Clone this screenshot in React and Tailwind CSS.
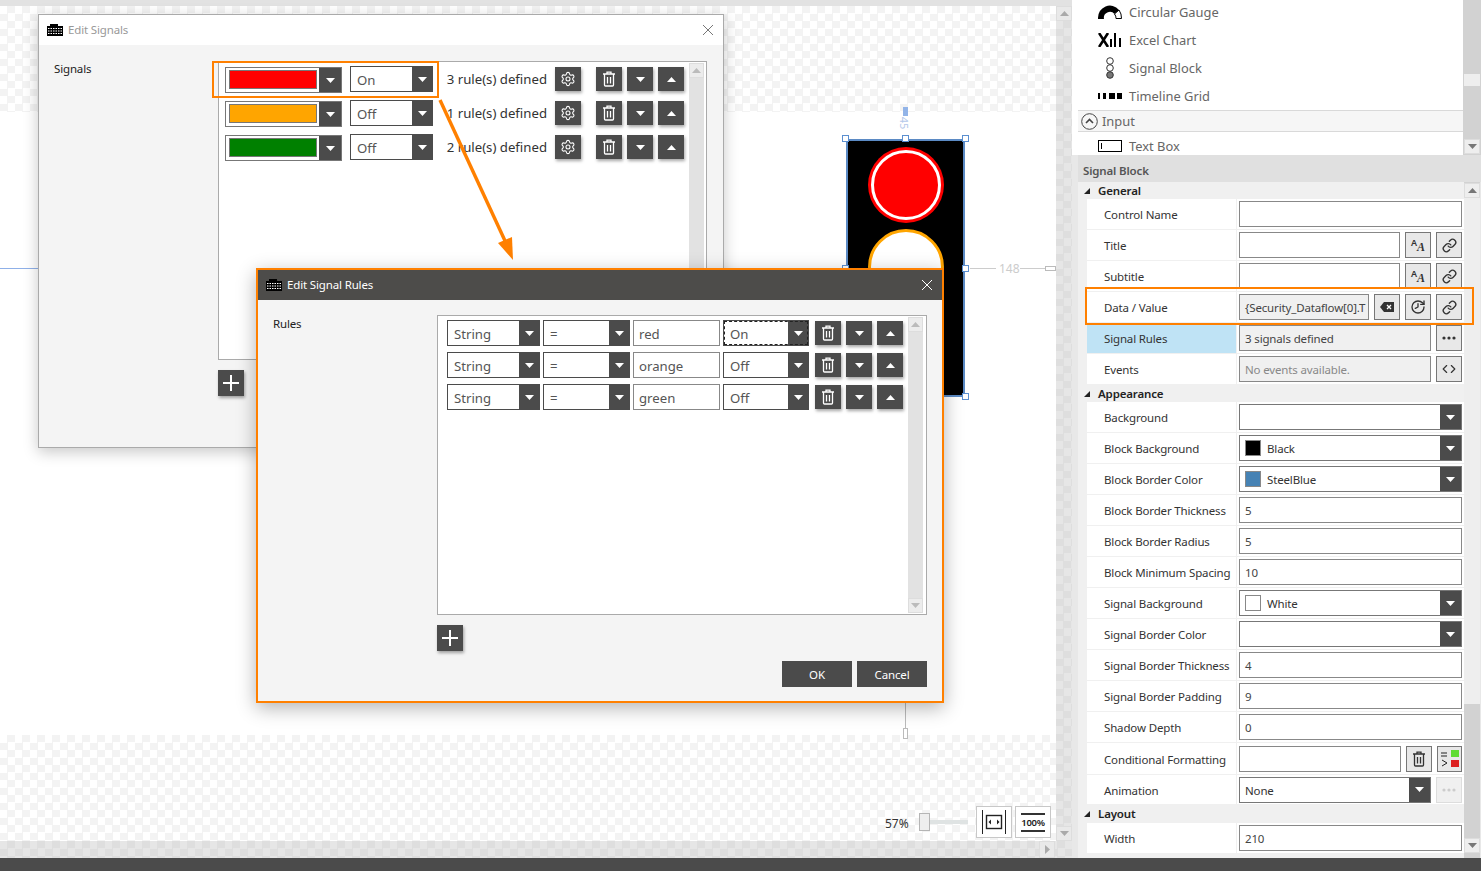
import { Code, Link, Settings, History } from 'lucide-react'

const checker = "bg-[conic-gradient(#f3f3f3_25%,#ffffff_0_50%,#f3f3f3_0_75%,#ffffff_0)] bg-[length:15px_15px]"
const barChecker = "bg-[conic-gradient(#dedede_25%,#e6e6e6_0_50%,#dedede_0_75%,#e6e6e6_0)] bg-[length:15px_15px]"
const small = 'text-[11.5px] tracking-[-0.15px]'
const big = 'text-[13.2px]'

function Tri({ up, className = 'text-white' }) {
  return (
    <svg width="9" height="5" viewBox="0 0 9 5" className={className}>
      <polygon points={up ? '4.5,0 9,5 0,5' : '0,0 9,0 4.5,5'} fill="currentColor" />
    </svg>
  )
}

function Trash() {
  return (
    <svg width="14" height="16" viewBox="0 0 14 16" fill="none" stroke="currentColor" strokeWidth="1.3">
      <path d="M1 3h12M5 3V1.2h4V3M2.5 3.5V14a1 1 0 0 0 1 1h7a1 1 0 0 0 1-1V3.5" />
      <path d="M5.5 6v6.5M8.5 6v6.5" />
    </svg>
  )
}

function AppLogo() {
  return (
    <svg width="16" height="12" viewBox="0 0 16 12" className="shrink-0">
      <path d="M0 2h3V0h8v2h5v10H0z" fill="#000" />
      <path d="M1 4.5h14M1 7h14M1 9.5h14" stroke="#fff" strokeWidth="1" strokeDasharray="1.5 1" />
    </svg>
  )
}

function CloseX({ className }) {
  return (
    <svg width="12" height="12" viewBox="0 0 12 12" className={className}>
      <path d="M1 1l10 10M11 1L1 11" stroke="currentColor" strokeWidth="1" fill="none" />
    </svg>
  )
}

// combo in the dialogs
function Combo({ className = '', text, focused }) {
  return (
    <div className={`flex h-[26px] shrink-0 border border-[#4b4b4b] bg-white ${className}`}>
      <div className={`flex-1 pl-[6px] leading-[26px] text-[#555] ${big}`}>{text}</div>
      <div className="flex w-[20px] items-center justify-center bg-[#4b4b4b]"><Tri /></div>
      {focused && <div className="pointer-events-none absolute inset-[2px] outline-1 outline-dashed outline-[#222]" />}
    </div>
  )
}

function DarkBtn({ children, className = '' }) {
  return (
    <div className={`mt-[1px] flex h-[24px] w-[26px] shrink-0 items-center justify-center bg-[#4b4b4b] text-white shadow-[1px_2px_3px_rgba(0,0,0,0.35)] ${className}`}>
      {children}
    </div>
  )
}

function ColorCombo({ color }) {
  return (
    <div className="mt-[1px] flex h-[26px] w-[117px] shrink-0 border border-[#777] bg-white">
      <div className="flex-1 py-[2px] pl-[3px]">
        <div className={`h-[19px] w-[88px] border border-[#777] ${color}`} />
      </div>
      <div className="flex w-[22px] items-center justify-center bg-[#4b4b4b]"><Tri /></div>
    </div>
  )
}

function SignalRow({ color, state, count }) {
  return (
    <div className="flex h-[34px] items-start">
      <ColorCombo color={color} />
      <Combo className="ml-[8px] w-[83px]" text={state} />
      <div className={`ml-[13px] mt-[3px] w-[101px] text-right leading-[20px] whitespace-nowrap text-[#333] ${big}`}>{count} rule(s) defined</div>
      <DarkBtn className="ml-[8px]"><Settings size={16} strokeWidth={1.6} /></DarkBtn>
      <DarkBtn className="ml-[15px]"><Trash /></DarkBtn>
      <DarkBtn className="ml-[5px]"><Tri /></DarkBtn>
      <DarkBtn className="ml-[5px]"><Tri up /></DarkBtn>
    </div>
  )
}

function RuleRow({ value, state, focused }) {
  return (
    <div className="flex h-[32px] items-start">
      <Combo className="w-[93px]" text="String" />
      <Combo className="ml-[3px] w-[87px]" text="=" />
      <div className={`ml-[3px] h-[26px] w-[87px] shrink-0 border border-[#888] bg-white pl-[5px] leading-[26px] text-[#555] ${big}`}>{value}</div>
      <div className="relative ml-[3px]">
        <Combo className="w-[86px]" text={state} focused={focused} />
      </div>
      <DarkBtn className="ml-[6px]"><Trash /></DarkBtn>
      <DarkBtn className="ml-[5px]"><Tri /></DarkBtn>
      <DarkBtn className="ml-[5px]"><Tri up /></DarkBtn>
    </div>
  )
}

function ListScroll({ className = '' }) {
  return (
    <div className={`flex w-[15px] shrink-0 flex-col justify-between bg-[#e2e2e2] ${className}`}>
      <div className="flex h-[15px] items-center justify-center border border-[#ddd] bg-[#ececec]"><Tri up className="text-[#bbb]" /></div>
      <div className="flex h-[15px] items-center justify-center border border-[#ddd] bg-[#ececec]"><Tri className="text-[#bbb]" /></div>
    </div>
  )
}

function PlusBtn({ className = '' }) {
  return (
    <div className={`flex h-[26px] w-[26px] items-center justify-center bg-[#4b4b4b] shadow-[1px_2px_3px_rgba(0,0,0,0.35)] ${className}`}>
      <svg width="16" height="16" viewBox="0 0 16 16"><path d="M8 0v16M0 8h16" stroke="#fff" strokeWidth="2" /></svg>
    </div>
  )
}

function EditSignals() {
  return (
    <div className="absolute left-[38px] top-[14px] h-[434px] w-[686px] border border-[#aaa] bg-[#f4f4f4] shadow-[0_4px_14px_rgba(0,0,0,0.22)]">
      <div className="flex h-[30px] items-center bg-white pl-[8px] pr-[9px]">
        <AppLogo />
        <span className={`ml-[5px] flex-1 text-[#999] ${small}`}>Edit Signals</span>
        <CloseX className="text-[#777]" />
      </div>
      <div className="flex pl-[15px] pt-[16px]">
        <div className={`w-[164px] leading-[16px] text-[#222] ${small}`}>Signals</div>
        <div>
          <div className="flex h-[299px] w-[489px] border border-[#aaa] bg-white">
            <div className="flex-1 pl-[6px] pt-[4px]">
              <SignalRow color="bg-[#ff0000]" state="On" count="3" />
              <SignalRow color="bg-[#ffa500]" state="Off" count="1" />
              <SignalRow color="bg-[#008000]" state="Off" count="2" />
            </div>
            <ListScroll className="mr-[2px] mt-[1px] mb-[1px]" />
          </div>
          <PlusBtn className="mt-[10px]" />
        </div>
      </div>
    </div>
  )
}

function EditRules() {
  return (
    <div className="absolute left-[256px] top-[268px] flex h-[435px] w-[688px] flex-col border-2 border-[#ff8000] bg-[#f4f4f4] shadow-[0_5px_18px_rgba(0,0,0,0.3)]">
      <div className="flex h-[30px] shrink-0 items-center bg-[#4d4c4a] pl-[8px] pr-[9px]">
        <AppLogo />
        <span className={`ml-[5px] flex-1 text-white ${small}`}>Edit Signal Rules</span>
        <CloseX className="text-white" />
      </div>
      <div className="flex pl-[15px] pt-[15px]">
        <div className={`w-[164px] pt-[1px] leading-[16px] text-[#222] ${small}`}>Rules</div>
        <div>
          <div className="flex h-[300px] w-[490px] border border-[#aaa] bg-white">
            <div className="flex-1 pl-[9px] pt-[4px]">
              <RuleRow value="red" state="On" focused />
              <RuleRow value="orange" state="Off" />
              <RuleRow value="green" state="Off" />
            </div>
            <ListScroll className="mr-[3px] mt-[1px] mb-[1px]" />
          </div>
          <PlusBtn className="mt-[10px]" />
          <div className="mt-[10px] flex justify-end gap-[5px]">
            <div className={`flex h-[26px] w-[70px] items-center justify-center bg-[#4b4b4b] pt-[2px] text-white ${small}`}>OK</div>
            <div className={`flex h-[26px] w-[70px] items-center justify-center bg-[#4b4b4b] pt-[2px] text-white ${small}`}>Cancel</div>
          </div>
        </div>
      </div>
    </div>
  )
}

function Handle({ className }) {
  return <div className={`absolute h-[7px] w-[7px] border border-[#5b8fd0] bg-white ${className}`} />
}

// the signal control on the design surface with its margin marks
function SignalBlock() {
  return (
    <>
      <div className="absolute left-[846px] top-[139px] h-[258px] w-[119px] overflow-hidden border-2 border-[#5b8ac4] bg-black">
        <div className="absolute left-[20px] top-[6px] h-[76px] w-[76px] rounded-full bg-[#ff0000] p-[3px]">
          <div className="h-full w-full rounded-full border-[3px] border-white bg-[#ff0000]" />
        </div>
        <div className="absolute left-[20px] top-[88px] h-[76px] w-[76px] rounded-full border-[3px] border-[#ffa500] bg-white" />
        <div className="absolute left-[20px] top-[170px] h-[76px] w-[76px] rounded-full border-[3px] border-[#008000] bg-black" />
      </div>
      <Handle className="left-[842px] top-[135px]" />
      <Handle className="left-[902px] top-[135px]" />
      <Handle className="left-[962px] top-[135px]" />
      <Handle className="left-[842px] top-[265px]" />
      <Handle className="left-[962px] top-[265px]" />
      <Handle className="left-[962px] top-[393px]" />
      <div className="absolute left-[903px] top-[107px] h-[9px] w-[5px] bg-[#92b4e8]" />
      <div className="absolute left-[898px] top-[117px] rotate-90 text-[11px] leading-[12px] text-[#b4c8ea]">45</div>
      <div className="absolute left-0 top-[268px] h-[1px] w-[40px] bg-[#8fb0e8]" />
      <div className="absolute left-[970px] top-[268px] h-[1px] w-[26px] bg-[#ccc]" />
      <div className="absolute left-[999px] top-[262px] text-[12px] leading-[14px] text-[#ccc]">148</div>
      <div className="absolute left-[1020px] top-[268px] h-[1px] w-[26px] bg-[#ccc]" />
      <div className="absolute left-[1045px] top-[266px] h-[5px] w-[11px] border border-[#bbb] bg-white" />
      <div className="absolute left-[905px] top-[703px] h-[26px] w-[1px] bg-[#bbb]" />
      <div className="absolute left-[903px] top-[728px] h-[11px] w-[5px] border border-[#bbb] bg-white" />
    </>
  )
}

function ZoomBar() {
  return (
    <div className="absolute left-[885px] top-[806px] flex h-[32px] items-center">
      <span className="w-[34px] pt-[3px] text-[12px] text-[#333]">57%</span>
      <div className="h-[18px] w-[11px] border border-[#b5b5b5] bg-[#eee]" />
      <div className="h-[4px] w-[38px] bg-[#dfe3e3]" />
      <div className="ml-[8px] flex h-[32px] w-[36px] items-center justify-center border border-[#c8c8c8] bg-white">
        <svg width="26" height="26" viewBox="0 0 26 26" fill="none">
          <path d="M1.5 1v24M24.5 1v24" stroke="#222" />
          <rect x="5.5" y="6.5" width="15" height="13" stroke="#222" strokeWidth="1.4" />
          <path d="M10 10.5v5l-2.5-2.5zM16 10.5v5l2.5-2.5z" fill="#222" />
        </svg>
      </div>
      <div className="ml-[3px] flex h-[32px] w-[36px] flex-col items-center justify-center border border-[#c8c8c8] bg-white">
        <div className="w-[24px] border-y-2 border-[#333] text-center text-[9.5px] font-semibold leading-[15px] tracking-[-0.3px] text-[#222]">100%</div>
      </div>
    </div>
  )
}

function Canvas() {
  return (
    <div className="flex w-[1072px] shrink-0 flex-col">
      <div className="h-[6px] bg-[#e2e2e2]" />
      <div className="flex min-h-0 flex-1">
        <div className="flex w-[1056px] flex-col">
          <div className={`h-[106px] ${checker}`} />
          <div className="h-[623px] bg-white" />
          <div className={`flex-1 ${checker}`} />
        </div>
        <div className={`flex w-[16px] flex-col justify-between ${barChecker}`}>
          <div className="flex h-[15px] items-center justify-center border border-[#ddd] bg-[#e9e9e9]"><Tri up className="text-[#aaa]" /></div>
          <div className="flex h-[15px] items-center justify-center border border-[#ddd] bg-[#e9e9e9]"><Tri className="text-[#aaa]" /></div>
        </div>
      </div>
      <div className={`flex h-[17px] justify-end pr-[17px] ${barChecker}`}>
        <div className="flex w-[16px] items-center justify-center border border-[#ddd] bg-[#e9e9e9]">
          <Tri className="rotate-[-90deg] text-[#aaa]" />
        </div>
      </div>
    </div>
  )
}

function Tool({ icon, label }) {
  return (
    <div className="flex h-[28px] items-center">
      <div className="flex w-[51px] justify-end pr-[7px]">{icon}</div>
      <span className="pt-[2px] text-[12.9px] text-[#666]">{label}</span>
    </div>
  )
}

function Toolbox() {
  return (
    <div className="ml-[6px] flex h-[155px] shrink-0 overflow-hidden">
      <div className="w-[385px] overflow-hidden bg-white">
        <div className="-mt-[2px]">
          <Tool label="Circular Gauge" icon={
            <svg width="24" height="14" viewBox="0 0 24 14">
              <path d="M0 14A12 13 0 0 1 21 5L16.5 9A6 6 0 0 0 6 14z" fill="#000" />
              <path d="M21 5A12 13 0 0 1 23.5 13.5H18A6 6 0 0 0 16.5 9z" fill="#fff" stroke="#000" />
            </svg>
          } />
          <Tool label="Excel Chart" icon={
            <svg width="24" height="14" viewBox="0 0 24 14"><path d="M1 0l9 14M10 0L1 14" stroke="#000" strokeWidth="2.6" /><path d="M13 6v8M17 0v14M22 5v9" stroke="#000" strokeWidth="2" /></svg>
          } />
          <Tool label="Signal Block" icon={
            <svg width="24" height="24" viewBox="0 0 24 24" fill="none" stroke="#333"><circle cx="12" cy="5" r="3.3" /><circle cx="12" cy="12" r="3.3" /><circle cx="12" cy="19" r="3.3" fill="#777" /></svg>
          } />
          <Tool label="Timeline Grid" icon={
            <svg width="24" height="6" viewBox="0 0 24 6"><path d="M0 0h2v6H0zM5 0h3v6H5zM11 0h6v6h-6zM19 0h5v6h-5z" fill="#000" /></svg>
          } />
          <div className="flex h-[22px] items-center border-y border-[#d9d9d9] bg-[#f6f6f6] pl-[3px] text-[12.9px] text-[#666]">
            <svg width="17" height="17" viewBox="0 0 17 17" fill="none" stroke="#444"><circle cx="8.5" cy="8.5" r="7.8" /><path d="M5 10l3.5-3.5L12 10" strokeWidth="1.6" /></svg>
            <span className="ml-[4px] pt-[2px]">Input</span>
          </div>
          <Tool label="Text Box" icon={
            <svg width="24" height="12" viewBox="0 0 24 12" fill="none" stroke="#000"><rect x="0.5" y="0.5" width="23" height="11" /><path d="M3.5 3v6" /></svg>
          } />
        </div>
      </div>
      <div className="flex w-[18px] flex-col justify-end bg-[#d2d2d2]">
        <div className="mb-[53px] mx-[1px] h-[12px] bg-[#eee]" />
        <div className="mx-[1px] mb-[1px] flex h-[15px] items-center justify-center border border-[#ddd] bg-[#eee]"><Tri className="text-[#777]" /></div>
      </div>
    </div>
  )
}

function Category({ label, className = 'h-[17px]' }) {
  return (
    <div className={`flex items-center bg-[#f0f0f0] pl-[6px] font-semibold text-[#222] ${small} ${className}`}>
      <svg width="6" height="6" viewBox="0 0 6 6"><polygon points="6,0 6,6 0,6" fill="#222" /></svg>
      <span className="ml-[8px]">{label}</span>
    </div>
  )
}

function Row({ label, active, className = 'h-[31px]', children }) {
  return (
    <div className={`ml-[9px] flex border-b border-[#f0f0f0] bg-white ${className}`}>
      <div className={`flex w-[149px] shrink-0 items-center whitespace-nowrap pl-[17px] pt-[2px] text-[#333] ${small} ${active ? 'bg-[#bfe3f5]' : ''}`}>{label}</div>
      <div className="flex min-w-0 flex-1 items-center gap-[5px] border-l border-[#f0f0f0] pl-[2px] pr-[2px]">{children}</div>
    </div>
  )
}

function Field({ text, className = 'flex-1', muted }) {
  return (
    <div className={`h-[26px] min-w-0 overflow-hidden whitespace-nowrap border border-[#888] pl-[5px] leading-[26px] ${small} ${muted ? 'text-[#888]' : 'text-[#444]'} ${className}`}>{text}</div>
  )
}

function Btn({ children, className = 'bg-[#e8e8e8] border-[#777] text-[#333]' }) {
  return <div className={`flex h-[26px] w-[26px] shrink-0 items-center justify-center border ${className}`}>{children}</div>
}

function FontBtn() {
  return (
    <Btn>
      <span className="mb-[4px] text-[9px] font-semibold leading-[10px] text-[#333]">A</span>
      <span className="mt-[4px] font-['Liberation_Serif',serif] text-[12px] font-bold italic leading-[12px] text-[#333]">A</span>
    </Btn>
  )
}

function Dots({ className = 'text-[#333]' }) {
  return (
    <svg width="14" height="4" viewBox="0 0 14 4" className={className}>
      <circle cx="2" cy="2" r="1.6" fill="currentColor" /><circle cx="7" cy="2" r="1.6" fill="currentColor" /><circle cx="12" cy="2" r="1.6" fill="currentColor" />
    </svg>
  )
}

function PropCombo({ swatch, text, className = 'flex-1' }) {
  return (
    <div className={`flex h-[26px] border border-[#777] bg-white ${className}`}>
      <div className={`flex flex-1 items-center pl-[5px] text-[#333] ${small}`}>
        {swatch && <div className={`mr-[6px] h-[16px] w-[16px] border border-[#888] ${swatch}`} />}
        <span className="pt-[2px]">{text}</span>
      </div>
      <div className="flex w-[21px] items-center justify-center bg-[#4b4b4b]"><Tri /></div>
    </div>
  )
}

function PropGrid() {
  return (
    <div className="flex min-h-0 flex-1">
      <div className="w-[386px] overflow-hidden bg-[#f0f0f0]">
        <Category label="General" />
        <Row label="Control Name"><Field text="" /></Row>
        <Row label="Title"><Field text="" /><FontBtn /><Btn><Link size={15} strokeWidth={2.2} /></Btn></Row>
        <Row label="Subtitle"><Field text="" /><FontBtn /><Btn><Link size={15} strokeWidth={2.2} /></Btn></Row>
        <Row label="Data / Value">
          <Field text="{Security_Dataflow[0].T" className="w-[130px] shrink-0 bg-[#f0f0f0]" />
          <Btn>
            <svg width="14" height="10" viewBox="0 0 14 10"><path d="M4 0h10v10H4L0 5z" fill="#333" /><path d="M7 3l4 4M11 3l-4 4" stroke="#fff" strokeWidth="1.3" /></svg>
          </Btn>
          <Btn><History size={16} className="-scale-x-100" /></Btn>
          <Btn><Link size={15} strokeWidth={2.2} /></Btn>
        </Row>
        <Row label="Signal Rules" active>
          <Field text="3 signals defined" className="flex-1 bg-[#f0f0f0]" />
          <Btn><Dots /></Btn>
        </Row>
        <Row label="Events">
          <Field text="No events available." className="flex-1 bg-[#f0f0f0]" muted />
          <Btn><Code size={14} /></Btn>
        </Row>
        <Category label="Appearance" />
        <Row label="Background"><PropCombo /></Row>
        <Row label="Block Background"><PropCombo swatch="bg-black" text="Black" /></Row>
        <Row label="Block Border Color"><PropCombo swatch="bg-[#4682b4]" text="SteelBlue" /></Row>
        <Row label="Block Border Thickness"><Field text="5" /></Row>
        <Row label="Block Border Radius"><Field text="5" /></Row>
        <Row label="Block Minimum Spacing"><Field text="10" /></Row>
        <Row label="Signal Background"><PropCombo swatch="bg-white" text="White" /></Row>
        <Row label="Signal Border Color"><PropCombo /></Row>
        <Row label="Signal Border Thickness"><Field text="4" /></Row>
        <Row label="Signal Border Padding"><Field text="9" /></Row>
        <Row label="Shadow Depth"><Field text="0" /></Row>
        <Row label="Conditional Formatting" className="h-[32px]">
          <Field text="" className="w-[162px] shrink-0" />
          <Btn className="border-[#777] bg-[#e8e8e8] text-[#333]"><Trash /></Btn>
          <Btn className="!w-[25px] border-[#777] bg-[#e8e8e8]">
            <svg width="20" height="20" viewBox="0 0 20 20"><path d="M1 4h6M1 7h6" stroke="#222" /><rect x="11" y="1" width="8" height="7" fill="#5fdc32" /><path d="M2 11l5 3-5 3" stroke="#222" fill="none" /><rect x="11" y="11" width="8" height="7" fill="#dc2020" /></svg>
          </Btn>
        </Row>
        <Row label="Animation" className="h-[30px]">
          <PropCombo text="None" />
          <Btn className="border-[#ddd] bg-[#f0f0f0]"><Dots className="text-[#ccc]" /></Btn>
        </Row>
        <Category label="Layout" className="h-[18px]" />
        <Row label="Width"><Field text="210" /></Row>
      </div>
      <div className="flex w-[16px] flex-col bg-[#d2d2d2]">
        <div className="mt-[1px] flex h-[15px] items-center justify-center border border-[#ddd] bg-[#eee]"><Tri up className="text-[#777]" /></div>
        <div className="h-[506px] bg-[#eee]" />
        <div className="flex-1" />
        <div className="mb-[5px] flex h-[15px] items-center justify-center border border-[#ddd] bg-[#eee]"><Tri className="text-[#777]" /></div>
      </div>
    </div>
  )
}

function RightPanel() {
  return (
    <div className="flex w-[409px] shrink-0 flex-col bg-white">
      <Toolbox />
      <div className="flex min-h-0 flex-1 flex-col bg-[#e8e8e8] pl-[6px]">
        <div className={`flex h-[27px] shrink-0 items-center bg-[#e0e0e0] pl-[5px] pt-[4px] font-semibold text-[#555] ${small}`}>Signal Block</div>
        <PropGrid />
      </div>
    </div>
  )
}

export default function App() {
  return (
    <div className="relative flex h-[871px] w-[1481px] flex-col overflow-hidden bg-white font-['Noto_Sans','Open_Sans',sans-serif]">
      <div className="flex h-[858px]">
        <Canvas />
        <RightPanel />
      </div>
      <div className="h-[13px] bg-[#4b4b4b]" />

      <SignalBlock />
      <ZoomBar />
      <EditSignals />
      <div className="absolute left-[212px] top-[61px] h-[37px] w-[227px] border-2 border-[#ff8000]" />
      <svg width="100" height="180" viewBox="0 0 100 180" className="absolute left-[430px] top-[95px]">
        <path d="M10 5L76 148" stroke="#ff8000" strokeWidth="3.4" />
        <polygon points="83,165 68,148 82,142" fill="#ff8000" />
      </svg>
      <EditRules />
      <div className="absolute left-[1085px] top-[287px] h-[38px] w-[389px] border-2 border-[#ff8000]" />
    </div>
  )
}
